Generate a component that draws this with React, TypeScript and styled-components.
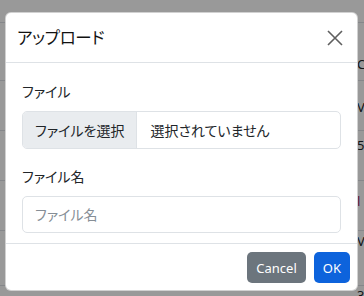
import React from "react";
import styled, { createGlobalStyle } from "styled-components";

const GlobalStyle = createGlobalStyle`
  html, body {
    margin: 0;
    padding: 0;
    background: #fff;
  }
  body {
    font-family: "Noto Sans", "Noto Sans CJK JP", sans-serif;
    color: #212529;
  }
  * {
    box-sizing: border-box;
  }
`;

// rows of the page table that sits behind the backdrop
const rows = [
  { h: 23, pad: 0, text: "" },
  { h: 58, pad: 32, text: "C" },
  { h: 50, pad: 17, text: "V" },
  { h: 50, pad: 5, text: "5" },
  { h: 50, pad: 11, text: "l", accent: true },
  { h: 55, pad: 1, text: "V" },
  { h: 30, pad: 0, text: "3.51" },
];

const App = () => {
  return (
    <Page>
      <GlobalStyle />
      <BgTable>
        {rows.map((r, i) => (
          <BgRow key={i} $h={r.h}>
            <BgCell />
            <BgText $pad={r.pad} $accent={r.accent}>
              {r.text}
            </BgText>
          </BgRow>
        ))}
      </BgTable>
      <Backdrop />
      <Modal>
        <Header>
          <Title>アップロード</Title>
          <CloseButton aria-label="close">
            <svg width="16" height="16" viewBox="0 0 16 16">
              <path
                d="M1 1 L15 15 M15 1 L1 15"
                stroke="#5f5f5f"
                strokeWidth="1.6"
                fill="none"
              />
            </svg>
          </CloseButton>
        </Header>
        <Body>
          <Field>
            <Label>ファイル</Label>
            <FileInput>
              <FileButton>ファイルを選択</FileButton>
              <FileName>選択されていません</FileName>
            </FileInput>
          </Field>
          <Field>
            <Label>ファイル名</Label>
            <TextInput placeholder="ファイル名" />
          </Field>
        </Body>
        <Footer>
          <Button $variant="secondary">Cancel</Button>
          <Button $variant="primary">OK</Button>
        </Footer>
      </Modal>
    </Page>
  );
};

export default App;

const Page = styled.div`
  position: relative;
  width: 364px;
  height: 296px;
  overflow: hidden;
  background: #fff;
`;

const BgTable = styled.div`
  display: flex;
  flex-direction: column;
`;

const BgRow = styled.div<{ $h: number }>`
  display: grid;
  grid-template-columns: 357px 1fr;
  height: ${(p) => p.$h}px;
  flex-shrink: 0;
  border-bottom: 1px solid #dee2e6;
  overflow: hidden;
`;

const BgCell = styled.div``;

const BgText = styled.div<{ $pad: number; $accent?: boolean }>`
  padding-top: ${(p) => p.$pad}px;
  font-size: 13px;
  line-height: 19px;
  white-space: nowrap;
  overflow: hidden;
  color: ${(p) => (p.$accent ? "#9b1c5b" : "#212529")};
`;

const Backdrop = styled.div`
  position: absolute;
  inset: 0;
  background: rgba(0, 0, 0, 0.4);
`;

const Modal = styled.div`
  position: absolute;
  left: 5px;
  top: 12px;
  width: 353px;
  height: 279px;
  background: #fff;
  border: 1px solid rgba(0, 0, 0, 0.18);
  border-radius: 6px;
  display: flex;
  flex-direction: column;
  overflow: hidden;
`;

const Header = styled.div`
  height: 50px;
  flex-shrink: 0;
  display: flex;
  align-items: center;
  justify-content: space-between;
  padding: 0 14px 0 11px;
  border-bottom: 1px solid #dee2e6;
`;

const Title = styled.h5`
  margin: 0;
  font-size: 16.5px;
  font-weight: 400;
  line-height: 1.2;
  letter-spacing: -0.3px;
  font-feature-settings: "palt";
  color: #111;
`;

const CloseButton = styled.button`
  display: flex;
  align-items: center;
  justify-content: center;
  width: 16px;
  height: 16px;
  padding: 0;
  margin-top: 1px;
  border: 0;
  background: transparent;
`;

const Body = styled.div`
  flex: 1;
  padding: 18px 16px 6px;
  display: flex;
  flex-direction: column;
  gap: 17px;
`;

const Field = styled.div`
  display: flex;
  flex-direction: column;
  gap: 9px;
`;

const Label = styled.label`
  font-size: 14px;
  line-height: 21px;
  font-feature-settings: "palt";
  color: #212529;
`;

const FileInput = styled.div`
  display: flex;
  height: 38px;
  border: 1px solid #dee2e6;
  border-radius: 5px;
  overflow: hidden;
  font-size: 14px;
  font-feature-settings: "palt";
`;

const FileButton = styled.div`
  display: flex;
  align-items: center;
  padding: 0 12px;
  background: #e9ecef;
  border-right: 1px solid #dee2e6;
  color: #212529;
`;

const FileName = styled.div`
  display: flex;
  align-items: center;
  padding: 0 13px;
  color: #212529;
`;

const TextInput = styled.input`
  height: 37px;
  padding: 0 12px;
  border: 1px solid #dee2e6;
  border-radius: 5px;
  font-family: inherit;
  font-size: 14px;
  font-feature-settings: "palt";
  color: #212529;
  outline: none;

  &::placeholder {
    color: #868e96;
  }
`;

const Footer = styled.div`
  flex-shrink: 0;
  display: flex;
  justify-content: flex-end;
  align-items: center;
  gap: 8px;
  padding: 8px 7px 7px;
  border-top: 1px solid #dee2e6;
`;

const Button = styled.button<{ $variant: "primary" | "secondary" }>`
  height: 31px;
  padding: 0 9px;
  border: 0;
  border-radius: 5px;
  font-family: "Noto Sans", sans-serif;
  font-size: 13px;
  color: #fff;
  background: ${(p) => (p.$variant === "primary" ? "#0d63dc" : "#6c757d")};
`;
